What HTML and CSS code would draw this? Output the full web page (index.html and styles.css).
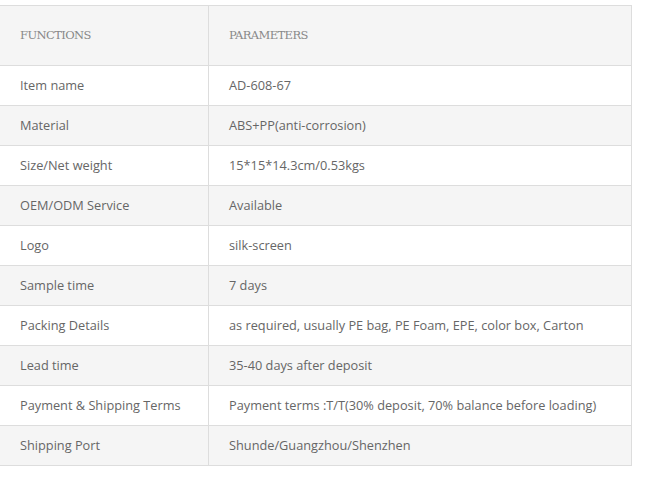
FILE: index.html
```html
<!DOCTYPE html>
<html>
<head>
<meta charset="utf-8">
<link rel="stylesheet" href="styles.css">
</head>
<body>
<div class="wrap">
<table class="spec">
  <thead>
    <tr><th class="c1">FUNCTIONS</th><th class="c2">PARAMETERS</th></tr>
  </thead>
  <tbody>
    <tr><td class="c1">Item name</td><td class="c2">AD-608-67</td></tr>
    <tr><td class="c1">Material</td><td class="c2">ABS+PP(anti-corrosion)</td></tr>
    <tr><td class="c1">Size/Net weight</td><td class="c2">15*15*14.3cm/0.53kgs</td></tr>
    <tr><td class="c1">OEM/ODM Service</td><td class="c2">Available</td></tr>
    <tr><td class="c1">Logo</td><td class="c2">silk-screen</td></tr>
    <tr><td class="c1">Sample time</td><td class="c2">7 days</td></tr>
    <tr><td class="c1">Packing Details</td><td class="c2">as required, usually PE bag, PE Foam, EPE, color box, Carton</td></tr>
    <tr><td class="c1">Lead time</td><td class="c2">35-40 days after deposit</td></tr>
    <tr><td class="c1">Payment &amp; Shipping Terms</td><td class="c2">Payment terms :T/T(30% deposit, 70% balance before loading)</td></tr>
    <tr><td class="c1">Shipping Port</td><td class="c2">Shunde/Guangzhou/Shenzhen</td></tr>
  </tbody>
</table>
</div>
</body>
</html>
```
FILE: styles.css
```css
html, body {
  margin: 0;
  padding: 0;
  background: #fff;
}
.wrap {
  padding-top: 5px;
}
.spec {
  border-collapse: collapse;
  width: 632px;
  table-layout: fixed;
  font-family: "Open Sans", "Liberation Sans", sans-serif;
  font-size: 12.75px;
  color: #666;
}
.spec th, .spec td {
  border: 1px solid #dddddd;
  padding: 0 0 0 20px;
  text-align: left;
  vertical-align: middle;
  white-space: nowrap;
}
.spec .c1 {
  border-left: none;
  width: 188px;
}
.spec th {
  height: 57px;
  padding-bottom: 2px;
  background: #f5f5f5;
  font-family: "DejaVu Serif", "Liberation Serif", serif;
  font-weight: normal;
  font-size: 11.5px;
  color: #888;
  letter-spacing: -0.6px;
}
.spec td {
  height: 37px;
  padding-bottom: 2px;
}
.spec tbody tr:nth-child(even) td {
  background: #f5f5f5;
}
```
